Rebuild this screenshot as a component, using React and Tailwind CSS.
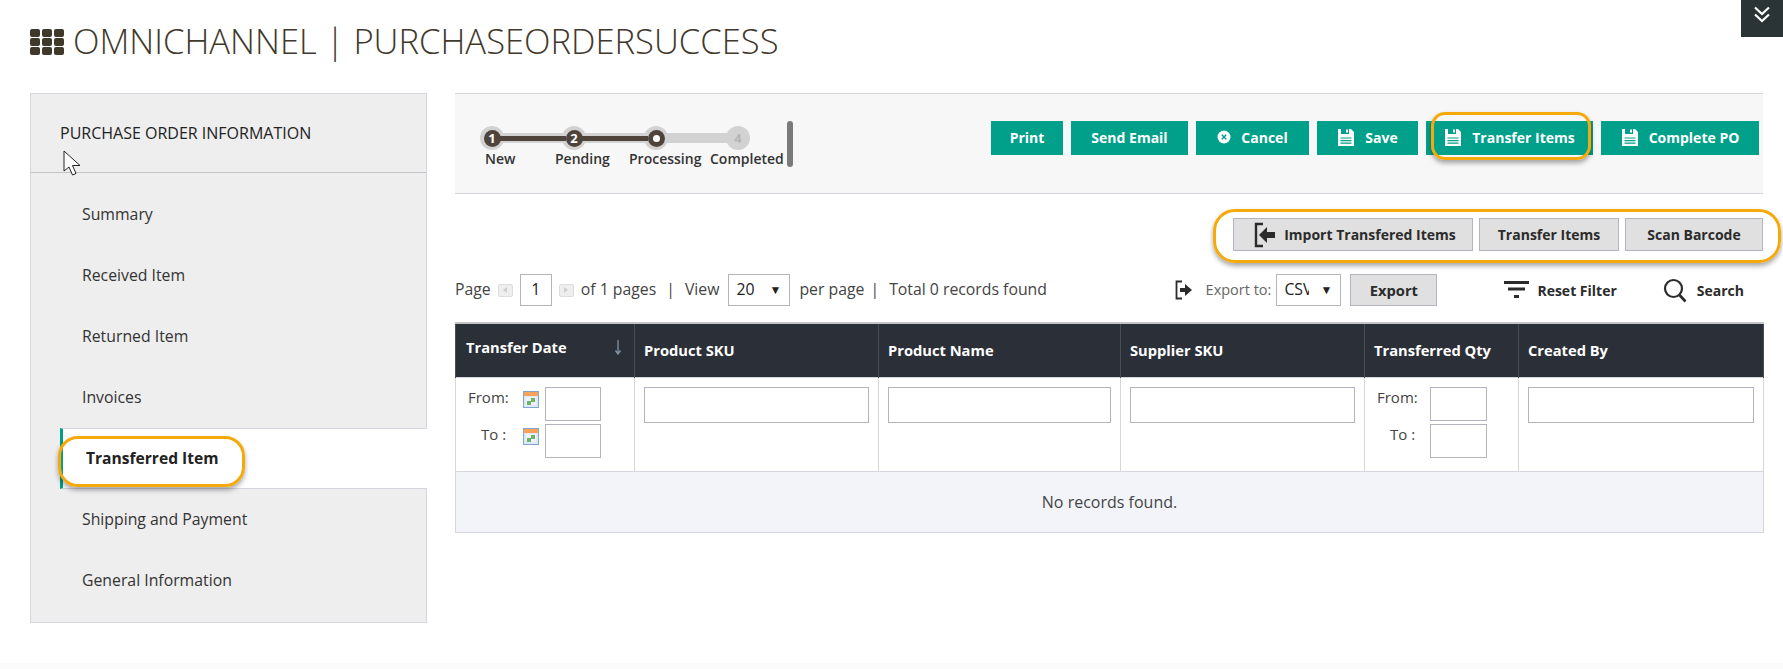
import React from 'react';

const Floppy = () => (
  <svg width="18" height="19" viewBox="0 0 18 19" className="shrink-0">
    <path d="M1 1h3v5h8V1h2l3 3v14H1z" fill="#fff" />
    <rect x="9" y="1.500" width="2" height="3" fill="#fff" />
    <path d="M3.500 10h11M3.500 12.600h11M3.500 15.200h11" stroke="#00a08a" strokeWidth="1.200" />
  </svg>
);

const CancelIcon = () => (
  <svg width="14" height="14" viewBox="0 0 14 14" className="shrink-0">
    <circle cx="7" cy="7" r="6.500" fill="#fff" />
    <path d="M4.800 4.800l4.400 4.400M9.200 4.800l-4.400 4.400" stroke="#00a08a" strokeWidth="1.400" />
  </svg>
);

const ImportIcon = () => (
  <svg width="22" height="26" viewBox="0 0 22 26" className="shrink-0">
    <path d="M9 2H2v22h7" fill="none" stroke="#2b2b2b" strokeWidth="2.400" />
    <path d="M21 10h-8V5l-8 8 8 8v-5h8z" fill="#2b2b2b" />
  </svg>
);

const ExportIcon = () => (
  <svg width="18" height="20" viewBox="0 0 18 20" className="shrink-0">
    <path d="M7 1.500H1.500v17H7" fill="none" stroke="#2b2b2b" strokeWidth="1.800" />
    <path d="M5 8h5V4l7 6-7 6v-4H5z" fill="#2b2b2b" />
  </svg>
);

const Calendar = () => (
  <svg width="16" height="17" viewBox="0 0 16 17" className="shrink-0">
    <rect x="0.500" y="0.500" width="15" height="16" fill="#dfe9f5" stroke="#7fa6d0" />
    <rect x="1" y="1" width="14" height="4" fill="#f7a35c" />
    <rect x="3" y="6" width="10" height="8" fill="#eef2f7" />
    <rect x="8" y="7" width="4" height="4" fill="#6fb36a" />
    <rect x="4" y="10" width="4" height="4" fill="#6fb36a" />
  </svg>
);

const PagerArrow = ({ flip }) => (
  <div className="ml-[7px] flex h-[13px] w-[15px] items-center justify-center rounded-[2px] border border-[#ddd] bg-[#eee]">
    <svg width="4" height="6" viewBox="0 0 4 6">
      <path d={flip ? 'M0 0l4 3-4 3z' : 'M4 0L0 3l4 3z'} fill="#cfcfcf" />
    </svg>
  </div>
);

const TealButton = ({ icon, label, width, ring }) => (
  <div className={`relative flex h-[34px] items-center justify-center gap-[10px] bg-[#00a08a] pb-[2px] text-[14px] font-bold text-white ${width}`}>
    {icon}
    <span>{label}</span>
    {ring && (
      <div className="absolute -top-[9px] left-[5px] h-[48px] w-[160px] rounded-[14px] border-[3px] border-[#f6a90a] shadow-[0_3px_5px_rgba(0,0,0,0.35)]"></div>
    )}
  </div>
);

const GrayButton = ({ label, width, icon }) => (
  <div className={`flex h-[33px] items-center justify-center gap-[8px] border border-[#b4b4c0] bg-[#e0e0e0] text-[14px] font-bold text-[#2b2b2b] ${width}`}>
    {icon}
    <span>{label}</span>
  </div>
);

const Select = ({ value, width, textWidth }) => (
  <div className={`flex h-[32px] items-center justify-between border border-[#b4b4c0] bg-white pl-[7px] pr-[8px] text-[#222] ${width}`}>
    <span className={`overflow-hidden whitespace-nowrap ${textWidth}`}>{value}</span>
    <span className="text-[12px] leading-none text-[#222]">▼</span>
  </div>
);

const NavItem = ({ label, active }) =>
  active ? (
    <div className="relative z-10 -mr-px flex h-[61px] items-center border-y border-l-[3px] border-y-[#d5d5de] border-l-[#00a08a] bg-white pl-[23px] text-[15.6px] font-bold text-[#222]">
      {label}
      <div className="absolute -left-[5px] top-[7px] h-[51px] w-[187px] rounded-[20px] border-[3px] border-[#f6a90a] shadow-[0_3px_5px_rgba(0,0,0,0.35)]"></div>
    </div>
  ) : (
    <div className="flex h-[61px] items-center pl-[22px] text-[15.8px] text-[#333]">{label}</div>
  );

const FromTo = ({ label, indent, gapClass, calendar, inputWidth }) => (
  <div className="flex items-start">
    <span className={`shrink-0 text-[15px] leading-5 ${gapClass} ${indent}`}>{label}</span>
    {calendar && (
      <div className="mr-[6px] mt-[4px]">
        <Calendar />
      </div>
    )}
    <div className={`h-[34px] border border-[#b4b4c0] bg-white ${inputWidth}`}></div>
  </div>
);

const TextFilter = () => (
  <td className="border border-[#d5d5de] px-[9px] pt-[9px] align-top">
    <div className="h-[36px] border border-[#b4b4c0] bg-white"></div>
  </td>
);

const Head = ({ label }) => (
  <th className="border-x border-[#474c55] px-[9px] text-left text-[14.7px] font-bold text-white">{label}</th>
);

export default function App() {
  const steps = [
    { label: '1', done: true },
    { label: '2', done: true },
    { current: true, done: true },
    { label: '4' },
  ];

  return (
    <div className="relative min-h-[669px] bg-white font-['Open_Sans',sans-serif] text-[16px] text-[#333]">
      {/* title */}
      <div className="flex h-[93px] items-center pb-[10px] pl-[30px]">
        <div className="grid grid-cols-3 gap-x-[2px] gap-y-[1px]">
          {[...Array(9)].map((_, i) => (
            <div key={i} className="h-[8px] w-[10px] rounded-[2px] bg-[#41382c]"></div>
          ))}
        </div>
        <h1 className="ml-[9px] whitespace-nowrap text-[34.6px] font-light leading-none text-[#41382c]">
          OMNICHANNEL | PURCHASEORDERSUCCESS
        </h1>
      </div>

      <div className="flex items-start">
        {/* sidebar */}
        <div className="relative ml-[30px] h-[530px] w-[397px] border border-[#d5d5de] bg-[#eeeeee]">
          <div className="flex h-[79px] items-center border-b border-[#c4c4c8] pl-[29px] text-[16px] text-[#222]">
            PURCHASE ORDER INFORMATION
          </div>
          <div className="ml-[29px] mt-[11px]">
            <NavItem label="Summary" />
            <NavItem label="Received Item" />
            <NavItem label="Returned Item" />
            <NavItem label="Invoices" />
            <NavItem label="Transferred Item" active />
            <NavItem label="Shipping and Payment" />
            <NavItem label="General Information" />
          </div>
          {/* mouse pointer */}
          <svg width="19" height="27" viewBox="0 0 19 27" className="absolute left-[32px] top-[56px]">
            <path d="M1 1v20l5-4 3.500 8 3.500-1.500-3.500-8H17z" fill="#fff" stroke="#222" strokeWidth="1" />
          </svg>
        </div>

        <div className="ml-[28px] w-[1308px]">
          {/* status bar */}
          <div className="flex h-[101px] items-start border-y border-[#d5d5de] bg-[#f7f7f7] pr-[4px] pt-[27px]">
            <div className="ml-[25px] mt-[5px] w-[307px] shrink-0">
              <div className="flex items-center">
                {steps.map((s, i) => (
                  <React.Fragment key={i}>
                    {i > 0 && (
                      <div className="relative z-10 -mx-1 flex h-[10px] w-[66px] items-center bg-[#d2d2d2]">
                        {s.done && <div className="h-[5px] w-full bg-[#4e443c]"></div>}
                      </div>
                    )}
                    <div className="flex h-[24px] w-[24px] shrink-0 items-center justify-center rounded-full bg-[#d2d2d2]">
                      {s.done ? (
                        <div className="relative z-20 flex h-[17px] w-[17px] items-center justify-center rounded-full bg-[#4e443c] text-[13px] font-bold leading-none text-white">
                          {s.current ? <div className="h-[7px] w-[7px] rounded-full bg-white"></div> : s.label}
                        </div>
                      ) : (
                        <span className="relative z-20 text-[13px] font-bold leading-none text-[#b5b5b5]">{s.label}</span>
                      )}
                    </div>
                  </React.Fragment>
                ))}
              </div>
              <div className="-mt-px ml-[5px] flex whitespace-nowrap text-[14px] font-semibold leading-5 text-[#333]">
                <span className="w-[70px]">New</span>
                <span className="w-[74px]">Pending</span>
                <span className="w-[81px]">Processing</span>
                <span>Completed</span>
              </div>
            </div>
            <div className="h-[46px] w-[6px] rounded-[3px] bg-[#7a7a7a]"></div>
            <div className="ml-auto flex gap-[8px]">
              <TealButton label="Print" width="w-[72px]" />
              <TealButton label="Send Email" width="w-[117px]" />
              <TealButton label="Cancel" width="w-[113px]" icon={<CancelIcon />} />
              <TealButton label="Save" width="w-[101px]" icon={<Floppy />} />
              <TealButton label="Transfer Items" width="w-[167px]" icon={<Floppy />} ring />
              <TealButton label="Complete PO" width="w-[158px]" icon={<Floppy />} />
            </div>
          </div>

          {/* import actions */}
          <div className="relative mt-[24px] flex justify-end gap-[6px]">
            <GrayButton label="Import Transfered Items" width="w-[240px] pl-[4px]" icon={<ImportIcon />} />
            <GrayButton label="Transfer Items" width="w-[140px]" />
            <GrayButton label="Scan Barcode" width="w-[138px]" />
            <div className="absolute -right-[18px] -top-[9px] h-[54px] w-[568px] rounded-[22px] border-[3px] border-[#f6a90a] shadow-[0_3px_5px_rgba(0,0,0,0.35)]"></div>
          </div>

          {/* pager */}
          <div className="mt-[23px] flex h-[32px] items-center text-[15.8px] text-[#444]">
            <span>Page</span>
            <PagerArrow />
            <div className="ml-[7px] flex h-[32px] w-[32px] items-center justify-center border border-[#b4b4c0] bg-white text-[#222]">1</div>
            <PagerArrow flip />
            <span className="ml-[7px]">of 1 pages</span>
            <span className="ml-[10px]">|</span>
            <span className="ml-[10px]">View</span>
            <div className="ml-[9px]">
              <Select value="20" width="w-[62px]" textWidth="" />
            </div>
            <span className="ml-[9px]">per page</span>
            <span className="ml-[6px]">|</span>
            <span className="ml-[10px]">Total 0 records found</span>
            <div className="ml-auto flex items-center">
              <ExportIcon />
              <span className="ml-[13px] text-[14.5px] text-[#666]">Export to:</span>
              <div className="ml-[5px]">
                <Select value="CSV" width="w-[65px]" textWidth="w-[25px]" />
              </div>
              <div className="ml-[9px] flex h-[32px] w-[87px] items-center justify-center border border-[#b4b4c0] bg-[#e0e0e0] text-[14.7px] font-bold text-[#2b2b2b]">
                Export
              </div>
              <svg width="25" height="18" viewBox="0 0 25 18" className="ml-[67px]">
                <path d="M0 1.500h25M4 8h17M10 15.500h5" stroke="#2b2b2b" strokeWidth="3" fill="none" />
              </svg>
              <span className="ml-[8px] text-[14px] font-bold text-[#2b2b2b]">Reset Filter</span>
              <svg width="25" height="25" viewBox="0 0 25 25" className="ml-[46px]">
                <circle cx="10.500" cy="10.500" r="8.500" fill="none" stroke="#2b2b2b" strokeWidth="2.200" />
                <path d="M16.500 17l6 6.500" stroke="#2b2b2b" strokeWidth="2.600" />
              </svg>
              <span className="ml-[9px] mr-[19px] text-[14px] font-bold text-[#2b2b2b]">Search</span>
            </div>
          </div>

          {/* grid */}
          <table className="mt-[16px] w-[1308px] table-fixed border-collapse text-[#444]">
            <colgroup>
              <col className="w-[179px]" />
              <col className="w-[244px]" />
              <col className="w-[242px]" />
              <col className="w-[244px]" />
              <col className="w-[154px]" />
              <col className="w-[245px]" />
            </colgroup>
            <thead>
              <tr className="h-[54px] border-t-2 border-[#c4c4c8] bg-[#2b2f38]">
                <th className="border-x border-[#474c55] pb-[6px] pl-[10px] pr-[12px] text-left text-[14.7px] font-bold text-white">
                  <div className="flex items-center justify-between">
                    <span>Transfer Date</span>
                    <svg width="8" height="15" viewBox="0 0 8 15">
                      <path d="M4 0v13M1.500 10.500L4 14l2.500-3.500" stroke="#7f93a8" strokeWidth="1.300" fill="none" />
                    </svg>
                  </div>
                </th>
                <Head label="Product SKU" />
                <Head label="Product Name" />
                <Head label="Supplier SKU" />
                <Head label="Transferred Qty" />
                <Head label="Created By" />
              </tr>
            </thead>
            <tbody>
              <tr className="h-[94px]">
                <td className="border border-[#d5d5de] pl-[12px] pt-[9px] align-top">
                  <FromTo label="From:" indent="" gapClass="w-[55px]" calendar inputWidth="w-[56px]" />
                  <div className="mt-[3px]">
                    <FromTo label="To :" indent="pl-[13px]" gapClass="w-[55px]" calendar inputWidth="w-[56px]" />
                  </div>
                </td>
                <TextFilter />
                <TextFilter />
                <TextFilter />
                <td className="border border-[#d5d5de] pl-[12px] pt-[9px] align-top">
                  <FromTo label="From:" indent="" gapClass="w-[53px]" inputWidth="w-[57px]" />
                  <div className="mt-[3px]">
                    <FromTo label="To :" indent="pl-[13px]" gapClass="w-[53px]" inputWidth="w-[57px]" />
                  </div>
                </td>
                <TextFilter />
              </tr>
              <tr className="h-[61px] bg-[#f3f4f9]">
                <td colSpan={6} className="border border-[#d5d5de] text-center">No records found.</td>
              </tr>
            </tbody>
          </table>
        </div>
      </div>

      {/* collapse toggle */}
      <div className="absolute right-0 top-0 flex h-[37px] w-[42px] items-center justify-center bg-[#2a3336] pb-[8px]">
        <svg width="18" height="17" viewBox="0 0 18 17">
          <path d="M2 1.500l7 6.500 7-6.500M2 8.500l7 6.500 7-6.500" fill="none" stroke="#fff" strokeWidth="2.200" />
        </svg>
      </div>

      {/* faint strip at the bottom edge of the capture */}
      <div className="absolute inset-x-0 bottom-0 h-[6px] bg-[#fbfbfb]"></div>
    </div>
  );
}
